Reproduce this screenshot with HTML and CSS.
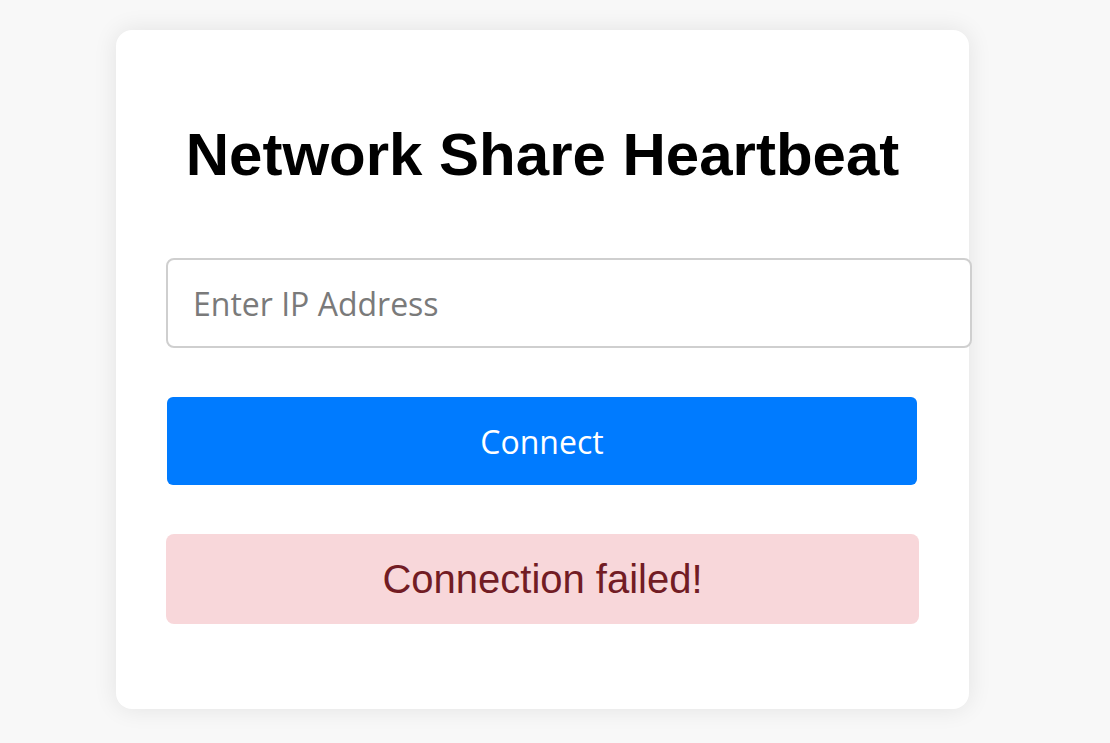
FILE: index.html
```html
<!DOCTYPE html>
<html lang="en">
<head>
<meta charset="utf-8">
<title>Network Share Heartbeat</title>
<link rel="stylesheet" href="styles.css">
</head>
<body>
  <main class="card">
    <h1 class="title">Network Share Heartbeat</h1>
    <input class="ip-input" type="text" placeholder="Enter IP Address">
    <button class="connect-btn" type="button">Connect</button>
    <div class="alert">Connection failed!</div>
  </main>
</body>
</html>
```

FILE: styles.css
```css
html, body {
  margin: 0;
  padding: 0;
}

body {
  background: #f8f8f8;
  font-family: "Liberation Sans", Arial, sans-serif;
  min-height: 743px;
}

.card {
  box-sizing: border-box;
  width: 853px;
  margin: 30px 0 0 116px;
  padding: 50px 50px 85px 50px;
  background: #ffffff;
  border-radius: 16px;
  box-shadow: 0 0 24px rgba(0, 0, 0, 0.09);
}

.title {
  margin: 40px 0 69px 0;
  font-size: 60px;
  font-weight: bold;
  text-align: center;
  color: #000;
  line-height: normal;
}

.ip-input {
  display: block;
  width: 752px;
  height: 86px;
  padding: 0 25px 0 25px;
  margin: 0;
  border: 2px solid #cfcfcf;
  border-radius: 8px;
  font-family: "Open Sans", "Noto Sans", sans-serif;
  font-size: 32px;
  color: #333;
  background: #fff;
  outline: none;
}

.ip-input::placeholder {
  color: #7a7a7a;
}

.connect-btn {
  display: block;
  box-sizing: border-box;
  width: 750px;
  height: 88px;
  margin: 49px 0 0 1px;
  border: none;
  border-radius: 6px;
  background: #007bff;
  color: #fff;
  font-family: "Open Sans", "Noto Sans", sans-serif;
  font-size: 32px;
}

.alert {
  box-sizing: border-box;
  height: 90px;
  margin-top: 49px;
  border-radius: 8px;
  background: #f8d7da;
  color: #721c24;
  font-size: 40px;
  display: flex;
  align-items: center;
  justify-content: center;
}
```
